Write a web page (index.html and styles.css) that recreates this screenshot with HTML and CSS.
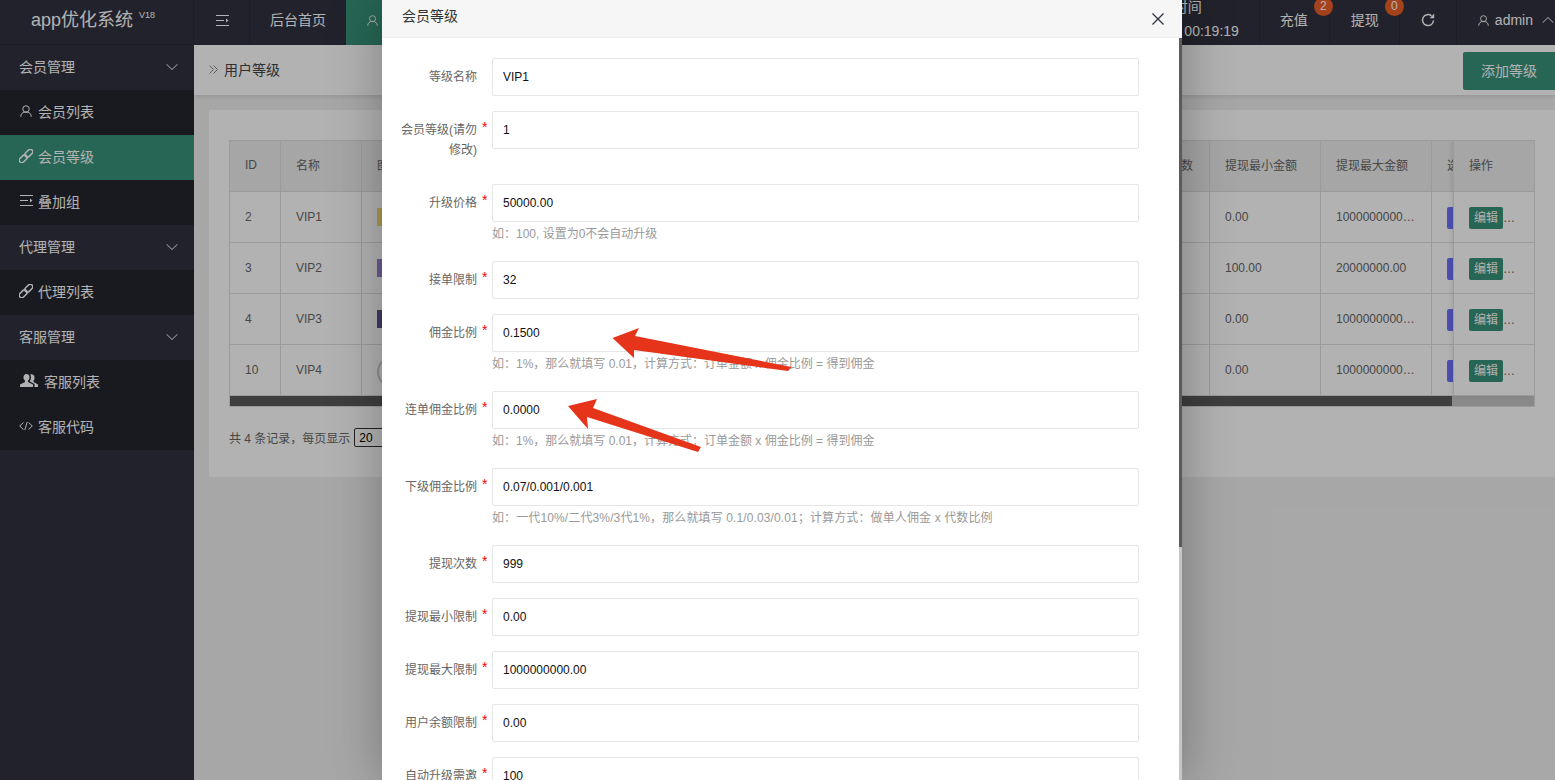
FILE: index.html
```html
<!DOCTYPE html>
<html lang="zh-CN">
<head>
  <meta charset="UTF-8" />
  <title>用户等级 | app优化系统</title>
  <link rel="stylesheet" href="styles.css">
</head>
<body>
  <!-- Header -->
  <div class="topbar">
    <div class="logo">app优化系统 <sup>V18</sup></div>
    <div class="top-item shrink">
      <svg class="icon-shrink" viewBox="0 0 13 11"><path d="M0 .5H13M0 5.5H8M0 10.5H13" /><path class="solid" d="M10 3.5L12.5 5.5L10 7.5Z" /></svg>
    </div>
    <div class="top-item home">后台首页</div>
    <div class="top-item active">
      <svg class="icon-user" viewBox="0 0 24 24"><circle cx="12" cy="8" r="6.5" /><path d="M1.5 23.5c0-6 4-9.5 10.5-9.5s10.5 3.500 10.500 9.500" /></svg>
    </div>
    <div class="top-right">
      <div class="top-time"><div class="time-label">时间</div><div>00:19:19</div></div>
      <div class="top-item money"><span class="has-badge">充值<i class="badge">2</i></span></div>
      <div class="top-item money"><span class="has-badge">提现<i class="badge">0</i></span></div>
      <div class="top-item refresh">
        <svg class="icon-refresh" viewBox="0 0 14 14"><path d="M12.500 7.500A5.500 5.500 0 1 1 10.500 2.800" /><path class="solid" d="M13.200 .6V5.200H8.600Z" /></svg>
      </div>
      <div class="top-item user">
        <svg class="icon-user" viewBox="0 0 24 24"><circle cx="12" cy="8" r="6.500" /><path d="M1.500 23.500c0-6 4-9.500 10.500-9.500s10.500 3.500 10.500 9.500" /></svg>
        <span>admin</span>
        <svg class="icon-chevron" viewBox="0 0 12 6"><path d="M.5 5.800L6 .5L11.500 5.800" /></svg>
      </div>
    </div>
  </div>

  <div class="layout">
    <!-- Sidebar -->
    <div class="sidebar">
      <div class="menu-group">会员管理<svg class="icon-chevron" viewBox="0 0 12 6"><path d="M.5 .2L6 5.500L11.500 .2" /></svg></div>
      <div class="menu-item">
        <svg class="icon-user" viewBox="0 0 24 24"><circle cx="12" cy="8" r="6.500" /><path d="M1.500 23.500c0-6 4-9.500 10.500-9.500s10.500 3.500 10.500 9.500" /></svg>
        会员列表
      </div>
      <div class="menu-item active">
        <svg class="icon-link" viewBox="0 0 14 14"><g transform="rotate(-45 7 7)"><rect x="-1.500" y="4.500" width="9" height="5" rx="2.500" /><rect x="6.500" y="4.500" width="9" height="5" rx="2.500" /></g></svg>
        会员等级
      </div>
      <div class="menu-item">
        <svg class="icon-shrink" viewBox="0 0 13 11"><path d="M0 .5H13M0 5.500H8M0 10.500H13" /><path class="solid" d="M10 3.500L12.500 5.500L10 7.500Z" /></svg>
        叠加组
      </div>
      <div class="menu-group">代理管理<svg class="icon-chevron" viewBox="0 0 12 6"><path d="M.5 .2L6 5.500L11.500 .2" /></svg></div>
      <div class="menu-item">
        <svg class="icon-link" viewBox="0 0 14 14"><g transform="rotate(-45 7 7)"><rect x="-1.500" y="4.500" width="9" height="5" rx="2.500" /><rect x="6.500" y="4.500" width="9" height="5" rx="2.500" /></g></svg>
        代理列表
      </div>
      <div class="menu-group">客服管理<svg class="icon-chevron" viewBox="0 0 12 6"><path d="M.5 .2L6 5.500L11.500 .2" /></svg></div>
      <div class="menu-item">
        <svg class="icon-group" viewBox="0 0 18 13"><path class="solid" d="M6.500 0C4.500 0 3.500 1.500 3.500 3.500C3.500 5 4.200 6 5 6.700V8L0 10.500V13H13V10.500L8 8V6.700C8.800 6 9.500 5 9.500 3.500C9.500 1.500 8.500 0 6.500 0Z" /><path class="solid" d="M11 .3C10.700 .3 10.500 .4 10.200 .5C10.700 1.300 11 2.300 11 3.500C11 4.900 10.500 6 9.900 6.900V7.500L14.500 10V13H18V10.500L13.500 8V6.700C14.300 6 14.500 5 14.500 3.500C14.500 1.500 13 .3 11 .3Z" /></svg>
        客服列表
      </div>
      <div class="menu-item">
        <svg class="icon-code" viewBox="0 0 14 8"><path d="M4.500 .5L.7 4L4.500 7.500M9.500 .5L13.300 4L9.500 7.500M8.200 0L5.800 8" /></svg>
        客服代码
      </div>
    </div>

    <!-- Content -->
    <div class="main">
      <div class="page-head">
        <div class="crumb">
          <svg class="icon-crumb" viewBox="0 0 9 9"><path d="M.5 .5L4.500 4.500L.5 8.500M4.500 .5L8.500 4.500L4.500 8.500" /></svg>
          用户等级
        </div>
        <button class="add-btn">添加等级</button>
      </div>

      <div class="card">
        <div class="table-box">
          <table class="level-table">
            <colgroup>
              <col class="c-id"><col class="c-name"><col class="c-pic"><col class="c-times"><col class="c-money"><col class="c-money"><col class="c-last">
            </colgroup>
            <thead>
              <tr><th>ID</th><th>名称</th><th>图标</th><th>提现次数</th><th>提现最小金额</th><th>提现最大金额</th><th>选项</th></tr>
            </thead>
            <tbody>
              <tr><td>2</td><td>VIP1</td><td><span class="pic pic-yellow"></span></td><td>999</td><td>0.00</td><td>1000000000.00</td><td><span class="blue-btn"></span></td></tr>
              <tr><td>3</td><td>VIP2</td><td><span class="pic pic-purple"></span></td><td>999</td><td>100.00</td><td>20000000.00</td><td><span class="blue-btn"></span></td></tr>
              <tr><td>4</td><td>VIP3</td><td><span class="pic pic-navy"></span></td><td>999</td><td>0.00</td><td>1000000000.00</td><td><span class="blue-btn"></span></td></tr>
              <tr><td>10</td><td>VIP4</td><td><span class="pic pic-round"></span></td><td>999</td><td>0.00</td><td>1000000000.00</td><td><span class="blue-btn"></span></td></tr>
            </tbody>
          </table>
          <div class="table-scroll"><div class="table-thumb"></div></div>
          <div class="fixed-col">
            <div class="fixed-head">操作</div>
            <div class="fixed-cell"><span class="edit-btn">编辑</span>…</div>
            <div class="fixed-cell"><span class="edit-btn">编辑</span>…</div>
            <div class="fixed-cell"><span class="edit-btn">编辑</span>…</div>
            <div class="fixed-cell"><span class="edit-btn">编辑</span>…</div>
          </div>
        </div>
        <div class="pager">共 4 条记录，每页显示 <select class="page-size"><option>20</option></select></div>
      </div>
    </div>
  </div>

  <div class="shade"></div>

  <!-- Modal -->
  <div class="modal">
    <div class="modal-head">
      <span>会员等级</span>
      <svg class="icon-close" viewBox="0 0 12 12"><path d="M.5 .5L11.500 11.500M11.500 .5L.5 11.500" /></svg>
    </div>
    <div class="modal-body">
      <div class="form-row">
        <label>等级名称</label><span class="star"></span>
        <div class="field"><input type="text" value="VIP1"></div>
      </div>
      <div class="form-row">
        <label>会员等级(请勿修改)</label><span class="star">*</span>
        <div class="field"><input type="text" value="1"></div>
      </div>
      <div class="form-row">
        <label>升级价格</label><span class="star">*</span>
        <div class="field"><input type="text" value="50000.00"><div class="help">如：100, 设置为0不会自动升级</div></div>
      </div>
      <div class="form-row">
        <label>接单限制</label><span class="star">*</span>
        <div class="field"><input type="text" value="32"></div>
      </div>
      <div class="form-row">
        <label>佣金比例</label><span class="star">*</span>
        <div class="field"><input type="text" value="0.1500"><div class="help">如：1%，那么就填写 0.01，计算方式：订单金额 x 佣金比例 = 得到佣金</div></div>
      </div>
      <div class="form-row">
        <label>连单佣金比例</label><span class="star">*</span>
        <div class="field"><input type="text" value="0.0000"><div class="help">如：1%，那么就填写 0.01，计算方式：订单金额 x 佣金比例 = 得到佣金</div></div>
      </div>
      <div class="form-row">
        <label>下级佣金比例</label><span class="star">*</span>
        <div class="field"><input type="text" value="0.07/0.001/0.001"><div class="help help-wide">如：一代10%/二代3%/3代1%，那么就填写 0.1/0.03/0.01；计算方式：做单人佣金 x 代数比例</div></div>
      </div>
      <div class="form-row">
        <label>提现次数</label><span class="star">*</span>
        <div class="field"><input type="text" value="999"></div>
      </div>
      <div class="form-row">
        <label>提现最小限制</label><span class="star">*</span>
        <div class="field"><input type="text" value="0.00"></div>
      </div>
      <div class="form-row">
        <label>提现最大限制</label><span class="star">*</span>
        <div class="field"><input type="text" value="1000000000.00"></div>
      </div>
      <div class="form-row">
        <label>用户余额限制</label><span class="star">*</span>
        <div class="field"><input type="text" value="0.00"></div>
      </div>
      <div class="form-row">
        <label>自动升级需邀</label><span class="star">*</span>
        <div class="field"><input type="text" value="100"></div>
      </div>
    </div>
    <div class="modal-scroll"><div class="modal-thumb"></div></div>
  </div>

  <!-- Red annotation arrows -->
  <svg class="arrows" viewBox="0 0 1555 780">
    <polygon points="612.500,338 639,328 635,336 791.500,367 788,371 634,350 634,358" />
    <polygon points="568,406 597,399 593,408 701,447 698,452 587,417 588,429" />
  </svg>
</body>
</html>
```

FILE: styles.css
```css
/* ---------------- General ---------------- */
:root {
  --dark: #31323f;
  --darker: #24252e;
  --green: #399279;
  --line: #dedede;
}

* {
  margin: 0;
  padding: 0;
  box-sizing: border-box;
}

html, body {
  height: 100%;
  overflow: hidden;
}

body {
  position: relative;
  font-family: "Liberation Sans", "Noto Sans CJK SC", sans-serif;
  font-size: 14px;
  color: #666;
  background-color: #f0f0f0;
}

svg {
  display: block;
  flex: none;
  fill: none;
  stroke: currentColor;
  stroke-width: 1;
}

svg .solid {
  fill: currentColor;
  stroke: none;
}

.icon-shrink { width: 13px; height: 11px; }
.icon-user { width: 11px; height: 11px; stroke-width: 2; }
.icon-chevron { width: 12px; height: 6px; }
.icon-refresh { width: 14px; height: 14px; stroke-width: 1.5; }
.icon-link { width: 14px; height: 14px; stroke-width: 1.5; }
.icon-group { width: 18px; height: 13px; }
.icon-code { width: 14px; height: 8px; }
.icon-crumb { width: 9px; height: 9px; color: #888; }

/* ---------------- Header ---------------- */
.topbar {
  display: flex;
  height: 45px;
  color: #fff;
  background-color: var(--dark);
}

.logo {
  width: 193px;
  padding-left: 31px;
  font-size: 18px;
  line-height: 41px;
  border-bottom: 1px solid #2a2b36;
}

.logo sup {
  font-size: 9px;
  line-height: 0;
  margin-left: 1px;
  position: relative;
  top: -1px;
}

.top-item {
  display: flex;
  align-items: center;
  padding: 0 20px 5px;
  border-left: 1px solid #2a2b36;
}

.top-item.shrink {
  padding: 0 20px 4px 22px;
}

.top-item.home {
  padding-bottom: 7px;
}

.top-item.active {
  width: 60px;
  padding-left: 21px;
  background-color: var(--green);
  border-left: none;
}

.top-right {
  display: flex;
  margin-left: auto;
}

.top-time {
  padding: 0 20px 0 0;
  line-height: 24px;
  margin-top: -5px;
  text-align: right;
}

.time-label {
  padding-right: 37px;
}

.top-item.money {
  padding: 0 20px 7px 21px;
}

.top-time + .top-item.money {
  padding: 0 21px 7px 20px;
}

.top-item.refresh {
  padding: 0 21px 5px 21px;
}

.top-item.user {
  gap: 6px;
  padding: 0 1px 5px 21px;
}

.top-item.user .icon-chevron {
  margin-left: 3px;
}

.has-badge {
  position: relative;
}

.badge {
  position: absolute;
  top: -12px;
  left: 34px;
  width: 19px;
  height: 19px;
  font-style: normal;
  font-size: 12px;
  line-height: 19px;
  text-align: center;
  border-radius: 50%;
  background-color: #ee5f28;
}

/* ---------------- Sidebar ---------------- */
.layout {
  display: flex;
  height: 735px;
}

.sidebar {
  width: 194px;
  flex: none;
  color: #fff;
  background-color: var(--dark);
}

.menu-group, .menu-item {
  display: flex;
  align-items: center;
  height: 45px;
  padding: 0 0 4px 19px;
}

.menu-group {
  justify-content: space-between;
  padding-right: 16px;
}

.menu-group .icon-chevron {
  margin-top: 3px;
}

.menu-item {
  gap: 5px;
  background-color: var(--darker);
}

.menu-item.active {
  background-color: var(--green);
}

.menu-item .icon-user {
  width: 12px;
  height: 12px;
  margin: 0 1px;
}

.menu-item .icon-shrink {
  margin-left: 1px;
}

.menu-item .icon-group {
  margin: 0 1px;
}

/* ---------------- Content ---------------- */
.main {
  flex: 1;
  min-width: 0;
}

.page-head {
  display: flex;
  justify-content: space-between;
  align-items: flex-start;
  height: 50px;
  padding-left: 15px;
  color: #444;
  background-color: #fff;
  box-shadow: 0 2px 4px rgba(0, 0, 0, 0.1);
  position: relative;
}

.crumb {
  display: flex;
  align-items: center;
  gap: 6px;
  height: 48px;
}

.add-btn {
  width: 92px;
  height: 38px;
  margin-top: 7px;
  padding-bottom: 2px;
  font: inherit;
  color: #fff;
  background-color: var(--green);
  border: none;
  border-radius: 2px 0 0 2px;
}

.card {
  height: 367px;
  margin: 15px 0 0 15px;
  padding: 30px 20px 0;
  background-color: #fff;
}

/* Table */
.table-box {
  position: relative;
  border: 1px solid var(--line);
  overflow: hidden;
  font-size: 12px;
}

.level-table {
  width: 1304px;
  table-layout: fixed;
  border-collapse: separate;
  border-spacing: 0;
}

.c-id { width: 51px; }
.c-name { width: 81px; }
.c-pic { width: 768px; }
.c-times { width: 80px; }
.c-money { width: 111px; }
.c-last { width: 102px; }

.level-table th, .level-table td {
  height: 51px;
  padding: 0 15px;
  font-weight: 400;
  text-align: left;
  white-space: nowrap;
  overflow: hidden;
  text-overflow: ellipsis;
  border-right: 1px solid var(--line);
  border-bottom: 1px solid var(--line);
}

.level-table th {
  padding-bottom: 3px;
  background-color: #eee;
}

.pic {
  display: block;
  width: 32px;
  height: 18px;
}

.pic-yellow { background-color: #f0dc71; }
.pic-purple { background-color: #9e80d0; }
.pic-navy { background-color: #5d5495; }

.pic-round {
  height: 32px;
  margin-top: 3px;
  border: 2px solid #ccc;
  border-radius: 50%;
}

.blue-btn {
  display: block;
  width: 40px;
  height: 22px;
  margin-top: 2px;
  border-radius: 2px;
  background-color: #6a72ff;
}

.table-scroll {
  height: 10px;
  background-color: #c5c5c5;
}

.table-thumb {
  width: 1222px;
  height: 100%;
  background-color: #5a5a5a;
}

.fixed-col {
  position: absolute;
  top: 0;
  right: 0;
  width: 81px;
  background-color: #fff;
  border-left: 1px solid var(--line);
  box-shadow: -2px 0 4px rgba(0, 0, 0, 0.08);
}

.fixed-head, .fixed-cell {
  display: flex;
  align-items: center;
  height: 51px;
  padding-left: 15px;
  border-bottom: 1px solid var(--line);
}

.fixed-head {
  padding-bottom: 3px;
  background-color: #eee;
}

.fixed-cell {
  padding-top: 2px;
}

.edit-btn {
  width: 34px;
  height: 22px;
  line-height: 23px;
  text-align: center;
  color: #fff;
  border-radius: 2px;
  background-color: var(--green);
}

.pager {
  display: flex;
  align-items: center;
  gap: 4px;
  height: 19px;
  margin-top: 21px;
  font-size: 12px;
}

.page-size {
  width: 60px;
  height: 19px;
  font-family: inherit;
  font-size: 12px;
  color: #000;
  background-color: #fff;
  border: 1px solid #333;
  border-radius: 2px;
}

/* ---------------- Modal ---------------- */
.shade {
  position: absolute;
  inset: 0;
  background-color: rgba(0, 0, 0, 0.3);
}

.modal {
  position: absolute;
  top: 0;
  left: 382px;
  width: 800px;
  height: 780px;
  overflow: hidden;
  background-color: #fff;
  box-shadow: 1px 1px 50px rgba(0, 0, 0, 0.3);
}

.modal-head {
  display: flex;
  justify-content: space-between;
  align-items: center;
  height: 38px;
  padding: 0 18px 8px 20px;
  color: #333;
  background-color: #f6f6f6;
  border-bottom: 1px solid #eee;
}

.icon-close {
  width: 12px;
  height: 12px;
  margin-top: 9px;
  color: #2f3040;
  stroke-width: 1.3;
}

.modal-body {
  padding: 20px 43px 0 19px;
  font-size: 12px;
}

.form-row {
  display: grid;
  grid-template-columns: 77px 14px 1fr;
  margin-bottom: 15px;
}

.form-row label {
  padding: 9px 1px 9px 0;
  line-height: 20px;
  text-align: right;
}

.star {
  padding: 6px 0 0 4px;
  font-size: 14px;
  line-height: 20px;
  color: #f00;
}

.field input {
  display: block;
  width: 100%;
  height: 38px;
  padding-left: 10px;
  font: inherit;
  color: #111;
  background-color: #fff;
  border: 1px solid #e6e6e6;
  border-radius: 2px;
  outline: none;
}

.help {
  height: 24px;
  line-height: 25px;
  color: #999;
}

.help-wide {
  letter-spacing: 0.12px;
}

.modal-scroll {
  position: absolute;
  top: 38px;
  right: 0;
  bottom: 0;
  width: 3px;
  background-color: #c6c6c6;
}

.modal-thumb {
  height: 509px;
  background-color: #5b5b5b;
}

.arrows {
  position: absolute;
  top: 0;
  left: 0;
  width: 1555px;
  height: 780px;
  stroke: none;
  fill: #e5341a;
}
```
